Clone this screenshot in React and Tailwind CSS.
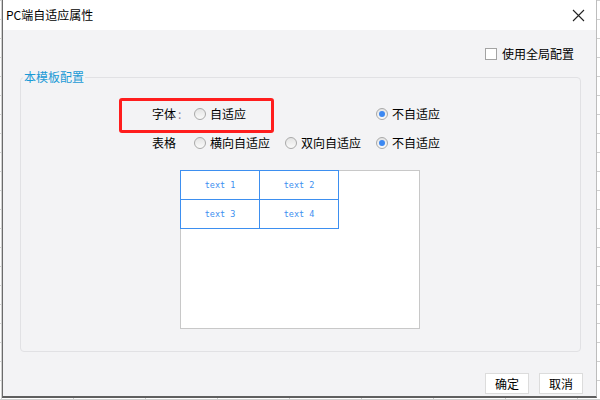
import React from 'react';

const cjk = { fontFamily: '"Noto Sans CJK SC", "Noto Sans", sans-serif' };

function Radio({ checked }) {
  return (
    <span className="flex h-[12px] w-[12px] shrink-0 items-center justify-center rounded-full border border-[#a9a9a9] bg-gradient-to-b from-[#e4e4e4] to-[#fafafa]">
      {checked && <span className="h-[6px] w-[6px] rounded-full bg-[#3c88f2]" />}
    </span>
  );
}

function Option({ checked, label, width = 'w-[91px]' }) {
  return (
    <label className={`flex items-center gap-[4px] ${width}`}>
      <Radio checked={checked} />
      <span>{label}</span>
    </label>
  );
}

export default function App() {
  return (
    <div
      className="h-[400px] w-[600px] overflow-hidden bg-white bg-[linear-gradient(to_right,#cfcfcf_1px,transparent_1px),linear-gradient(to_bottom,#cfcfcf_1px,transparent_1px)] bg-[size:72px_19px] bg-[position:1px_0px] text-[12px] text-black"
      style={cjk}
    >
      <div className="ml-[2px] flex h-[398px] w-[595px] flex-col border-b-2 border-l border-r border-b-[#5f5f5f] border-l-[#6b6b6b] border-r-[#bdbdbd] bg-[#f3f3f5]">
        {/* title bar */}
        <div className="flex h-[30px] shrink-0 items-center justify-between bg-white pl-[3px] pr-[11px]">
          <span className="text-[12px] leading-[16px]">PC端自适应属性</span>
          <svg width="13" height="13" viewBox="0 0 13 13" className="text-[#222]">
            <path d="M1 1 L12 12 M12 1 L1 12" stroke="currentColor" strokeWidth="1.1" fill="none" />
          </svg>
        </div>

        {/* body */}
        <div className="flex flex-1 flex-col">
          <div className="flex h-[16px] items-center justify-end gap-[5px] pr-[22px] mt-[16px]">
            <span className="h-[12px] w-[12px] border border-[#a3a3a3] bg-white" />
            <span className="leading-[16px]">使用全局配置</span>
          </div>

          <fieldset className="relative ml-[17px] mt-[7px] w-[561px] rounded-[4px] border border-[#e1e1e4] pb-[22px]">
            <legend className="ml-[2px] px-[1px] leading-[16px] text-[#1a9ad6]">本模板配置</legend>

            <div className="mt-[14px] pl-[131px]">
              <div className="flex h-[29px] items-center leading-[16px]">
                <span className="w-[42px]">
                  字体<span className="ml-[2px] text-[#8a7b9a]">:</span>
                </span>
                <Option label="自适应" />
                <span className="w-[91px]" />
                <Option checked label="不自适应" />
              </div>
              <div className="flex h-[29px] items-center leading-[16px]">
                <span className="w-[42px]">表格</span>
                <Option label="横向自适应" />
                <Option label="双向自适应" />
                <Option checked label="不自适应" />
              </div>
            </div>

            {/* red annotation box */}
            <div className="pointer-events-none absolute left-[98px] top-[13px] h-[35px] w-[155px] rounded-[3px] border-[3px] border-[#ff1d1d]" />

            <div className="ml-[159px] mt-[13px] h-[159px] w-[240px] border border-[#c8c8c8] bg-white">
              <div
                className="-ml-px -mt-px grid w-[159px] grid-cols-[79px_79px] border-l border-t border-[#3d8ff0] text-[8.5px] font-medium text-[#3d8ff0]"
                style={{ fontFamily: '"DejaVu Sans Mono", monospace' }}
              >
                {['text 1', 'text 2', 'text 3', 'text 4'].map((t) => (
                  <div key={t} className="flex h-[29px] items-center justify-center border-b border-r border-[#3d8ff0]">
                    {t}
                  </div>
                ))}
              </div>
            </div>
          </fieldset>

          <div className="mt-[21px] flex justify-end gap-[10px] pr-[13px]">
            <button className="h-[21px] w-[44px] border border-[#dcdcdc] bg-white text-[12px] leading-[16px]">确定</button>
            <button className="h-[21px] w-[44px] border border-[#dcdcdc] bg-white text-[12px] leading-[16px]">取消</button>
          </div>
        </div>
      </div>
    </div>
  );
}
